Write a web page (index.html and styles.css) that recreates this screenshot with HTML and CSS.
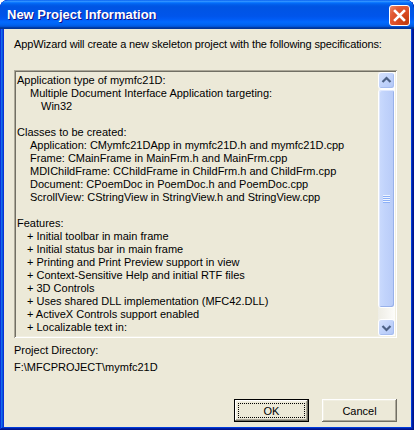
FILE: index.html
```html
<!DOCTYPE html>
<html>
<head>
<meta charset="utf-8">
<link rel="stylesheet" href="styles.css">
</head>
<body>
<div class="window">
  <div class="titlebar">
    <span class="title">New Project Information</span>
    <div class="close">
      <svg width="19" height="19" viewBox="0 0 19 19"><path d="M5 5 L14 14 M14 5 L5 14" stroke="#fff" stroke-width="2.6" stroke-linecap="square" fill="none"/></svg>
    </div>
  </div>
  <div class="client">
    <p class="intro">AppWizard will create a new skeleton project with the following specifications:</p>
    <div class="listbox">
      <div class="content">
        <div class="line">Application type of mymfc21D:</div>
        <div class="line l1">Multiple Document Interface Application targeting:</div>
        <div class="line l2">Win32</div>
        <div class="line"></div>
        <div class="line">Classes to be created:</div>
        <div class="line l1">Application: CMymfc21DApp in mymfc21D.h and mymfc21D.cpp</div>
        <div class="line l1">Frame: CMainFrame in MainFrm.h and MainFrm.cpp</div>
        <div class="line l1">MDIChildFrame: CChildFrame in ChildFrm.h and ChildFrm.cpp</div>
        <div class="line l1">Document: CPoemDoc in PoemDoc.h and PoemDoc.cpp</div>
        <div class="line l1">ScrollView: CStringView in StringView.h and StringView.cpp</div>
        <div class="line"></div>
        <div class="line">Features:</div>
        <div class="line f">+ Initial toolbar in main frame</div>
        <div class="line f">+ Initial status bar in main frame</div>
        <div class="line f">+ Printing and Print Preview support in view</div>
        <div class="line f">+ Context-Sensitive Help and initial RTF files</div>
        <div class="line f">+ 3D Controls</div>
        <div class="line f">+ Uses shared DLL implementation (MFC42.DLL)</div>
        <div class="line f">+ ActiveX Controls support enabled</div>
        <div class="line f">+ Localizable text in:</div>
      </div>
      <div class="scrollbar">
        <div class="sb-btn">
          <svg width="15" height="15" viewBox="0 0 15 15"><path d="M3.5 9 L7.5 5 L11.5 9" stroke="#4d6185" stroke-width="2.2" fill="none"/></svg>
        </div>
        <div class="thumb"><div class="grip"></div></div>
        <div class="track"></div>
        <div class="sb-btn">
          <svg width="15" height="15" viewBox="0 0 15 15"><path d="M3.5 6 L7.5 10 L11.5 6" stroke="#4d6185" stroke-width="2.2" fill="none"/></svg>
        </div>
      </div>
    </div>
    <div class="dir-label">Project Directory:</div>
    <div class="dir">F:\MFCPROJECT\mymfc21D</div>
    <div class="buttons">
      <button class="btn default"><span class="focus">OK</span></button>
      <button class="btn">Cancel</button>
    </div>
  </div>
</div>
</body>
</html>
```

FILE: styles.css
```css
html, body {
  margin: 0;
  padding: 0;
  background: #ffffff;
}

.window {
  width: 414px;
  height: 430px;
  box-sizing: border-box;
  display: flex;
  flex-direction: column;
  background: #0831d9;
  border-radius: 8px 8px 0 0;
  overflow: hidden;
  box-shadow: inset -1px -1px #00138c, inset 1px 1px #0831d9, inset -2px -2px #001ea0, inset 2px 2px #166aee, inset -3px -3px #003bda, inset 3px 3px #0855dd;
}

.titlebar {
  height: 29px;
  flex: none;
  display: flex;
  align-items: flex-start;
  padding: 0 4px 0 7px;
  border-radius: 8px 8px 0 0;
  background: linear-gradient(to bottom, #0058ee 0%, #3593ff 4%, #288eff 6%, #127dff 8%, #036ffc 10%, #0262ee 14%, #0057e5 20%, #0054e3 24%, #0055eb 56%, #005bf5 66%, #026afe 76%, #0062ef 86%, #0052d6 92%, #0040ab 94%, #003092 100%);
}

.title {
  margin-top: 7px;
  font-family: "Liberation Sans", Arial, sans-serif;
  font-weight: bold;
  font-size: 13px;
  line-height: 16px;
  color: #ffffff;
  text-shadow: 1px 1px #0f1089;
}

.close {
  margin-left: auto;
  margin-top: 5px;
  width: 21px;
  height: 21px;
  box-sizing: border-box;
  border: 1px solid #ffffff;
  border-radius: 3px;
  background: radial-gradient(circle at 85% 85%, #c23c0c 0%, #d84a22 40%, #e25a34 70%, #ee8c70 100%);
  display: flex;
  align-items: center;
  justify-content: center;
}

.client {
  flex: 1;
  margin: 0 3px 3px 4px;
  background: #ece9d8;
  padding: 0 14px 0 10px;
  display: flex;
  flex-direction: column;
  font-family: "Liberation Sans", Arial, sans-serif;
  font-size: 11px;
  line-height: 13px;
  color: #000000;
}

.intro {
  margin: 9px 0 0 0;
  letter-spacing: -0.12px;
}

.listbox {
  margin-top: 19px;
  height: 268px;
  flex: none;
  box-sizing: border-box;
  display: flex;
  box-shadow: inset 1px 1px #aca899, inset -1px -1px #ffffff, inset 2px 2px #716f64, inset -2px -2px #f1efe2;
  padding: 2px;
}

.content {
  flex: 1;
  padding: 2px 0 0 1px;
  overflow: hidden;
  white-space: nowrap;
}

.line {
  height: 13px;
}

.l1 { padding-left: 13px; }
.l2 { padding-left: 24px; }
.f { padding-left: 10px; }

.scrollbar {
  width: 17px;
  flex: none;
  display: flex;
  flex-direction: column;
  background: linear-gradient(to right, #eeede5, #f5f4ef 50%, #fdfdfa);
}

.sb-btn {
  height: 17px;
  flex: none;
  box-sizing: border-box;
  border: 1px solid #ffffff;
  border-radius: 3px;
  background: linear-gradient(135deg, #d6e2fd 0%, #c1d3fb 50%, #b2c7f6 100%);
  box-shadow: inset -1px -1px #a6bdf0;
  display: flex;
  align-items: center;
  justify-content: center;
}

.thumb {
  height: 219px;
  flex: none;
  box-sizing: border-box;
  border: 1px solid #ffffff;
  border-radius: 3px;
  background: linear-gradient(to right, #cadafd 0%, #c1d3fb 40%, #b8cbf8 100%);
  box-shadow: inset -1px -1px #98b1ea, inset 1px 1px #dfe8fe;
  display: flex;
  align-items: center;
  justify-content: center;
}

.grip {
  width: 7px;
  height: 8px;
  background: repeating-linear-gradient(to bottom, #eef4fe 0px, #eef4fe 1px, #8cb0f8 1px, #8cb0f8 2px);
}

.track {
  flex: 1;
}

.dir-label {
  margin-top: 6px;
}

.dir {
  margin-top: 4px;
}

.buttons {
  margin-top: auto;
  margin-bottom: 5px;
  display: flex;
  justify-content: flex-end;
  gap: 13px;
}

.btn {
  width: 75px;
  height: 23px;
  box-sizing: border-box;
  margin: 0;
  padding: 0;
  border: none;
  background: #ece9d8;
  font-family: "Liberation Sans", Arial, sans-serif;
  font-size: 11px;
  color: #000000;
  box-shadow: inset -1px -1px #716f64, inset 1px 1px #ffffff, inset -2px -2px #aca899, inset 2px 2px #f1efe2;
}

.btn.default {
  border: 1px solid #000000;
  display: flex;
  padding: 3px;
}

.focus {
  flex: 1;
  border: 1px dotted #000000;
  display: flex;
  align-items: center;
  justify-content: center;
}
```
